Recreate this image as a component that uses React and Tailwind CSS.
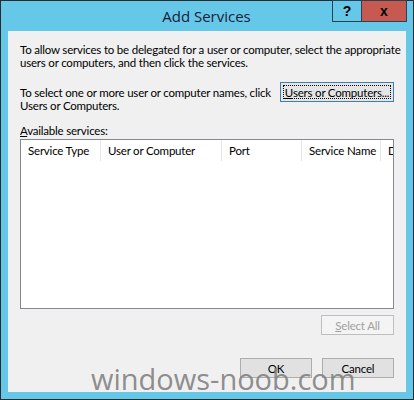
export default function App() {
  const columns = [
    { label: 'Service Type', w: 'w-[80px]' },
    { label: 'User or Computer', w: 'w-[121px]' },
    { label: 'Port', w: 'w-[80px]' },
    { label: 'Service Name', w: 'w-[79px]' },
    { label: 'D', w: 'flex-1' },
  ];

  return (
    <div className="relative w-[414px] h-[400px] bg-[#2b2b2b] p-px font-['Lato',sans-serif] text-[11.5px] tracking-[-0.2px] text-black">
      <div className="flex flex-col h-full bg-[#65c8e8] px-[7px] pb-[7px]">
        {/* title bar */}
        <div className="relative h-[30px] flex items-center justify-center tracking-normal">
          <span className="font-['Open_Sans',sans-serif] text-[15px] text-[#1b1b3a] -ml-[1px]">Add Services</span>
          <div className="absolute right-[-1px] top-[-1px] flex font-['Liberation_Sans',sans-serif]">
            <div className="w-[29px] h-[22px] border border-[#2f3f4f] border-r-0 flex items-center justify-center font-bold text-[14px]">?</div>
            <div className="w-[46px] h-[22px] border border-[#2f3f4f] bg-[#c75a50] flex items-center justify-center font-bold text-[14px]">x</div>
          </div>
        </div>

        {/* body */}
        <div className="flex-1 bg-[#f0f0f0] flex flex-col pl-[12px] pr-[11px] pt-[12px] leading-[13px]">
          <p className="whitespace-nowrap">
            To allow services to be delegated for a user or computer, select the appropriate
            <br />
            users or computers, and then click the services.
          </p>

          <div className="flex items-start justify-between mt-[17px]">
            <p className="whitespace-nowrap">
              To select one or more user or computer names, click
              <br />
              Users or Computers.
            </p>
            <button className="mt-[-4px] mr-[1px] w-[114px] h-[20px] border border-[#3c7fb1] bg-[#e5e5e5] p-[2px]">
              <span className="flex items-center justify-center h-full border border-dotted border-black whitespace-nowrap">
                <span className="underline">U</span>sers or Computers...
              </span>
            </button>
          </div>

          <div className="mt-[12px]">
            <span className="underline">A</span>vailable services:
          </div>

          <div className="mt-[2px] h-[170px] border border-[#828790] bg-white mr-[1px]">
            <div className="flex h-[21px] items-center">
              {columns.map((c, i) => (
                <div
                  key={c.label}
                  className={`${c.w} h-full flex items-center pl-[7px] overflow-hidden whitespace-nowrap ${i < 4 ? 'border-r border-[#e5e5e5]' : ''}`}
                >
                  {c.label}
                </div>
              ))}
            </div>
          </div>

          <div className="flex justify-end mt-[6px] mr-[1px]">
            <button className="w-[73px] h-[20px] border border-[#bfbfbf] bg-[#f4f4f4] text-[#a0a0a0]">
              <span className="underline">S</span>elect All
            </button>
          </div>

          <div className="flex justify-end gap-[10px] mt-[23px] mr-[1px]">
            <button className="w-[72px] h-[20px] border border-[#adadad] bg-[#e1e1e1]">OK</button>
            <button className="w-[72px] h-[20px] border border-[#adadad] bg-[#e1e1e1]">Cancel</button>
          </div>
        </div>
      </div>

      {/* watermark */}
      <div className="absolute left-[91px] top-[361px] font-['Open_Sans',sans-serif] text-[29px] leading-[36px] tracking-normal text-[#808080]/90 pointer-events-none">
        windows-noob.com
      </div>
    </div>
  );
}
